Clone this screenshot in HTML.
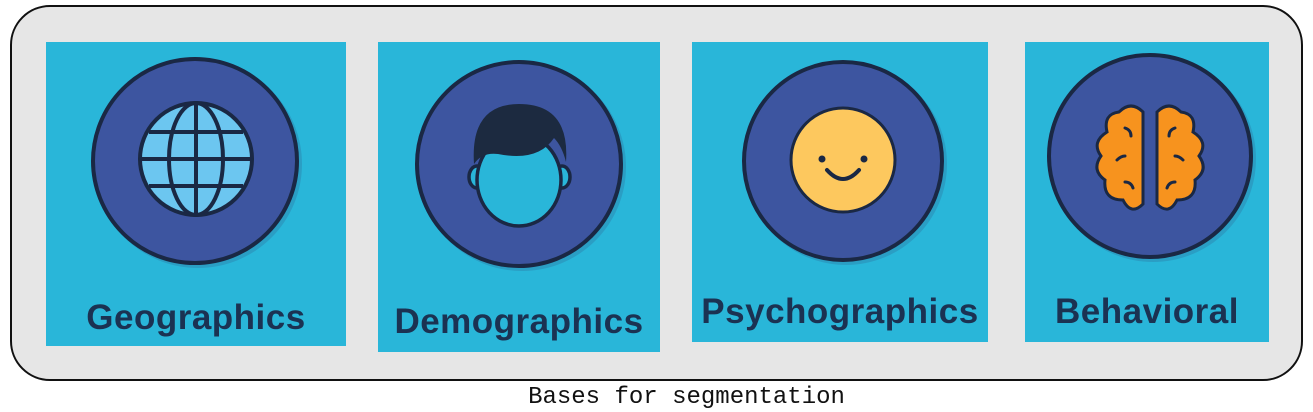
<!DOCTYPE html>
<html><head><style>
body{margin:0;width:1313px;height:412px;background:#fff;position:relative;overflow:hidden;font-family:"Liberation Sans",sans-serif}
.box{position:absolute;left:10px;top:5px;width:1289px;height:372px;border:2px solid #111;border-radius:40px;background:#e6e6e6}
.p{position:absolute;background:#29b6d9}
.t{position:absolute;left:-20px;right:-20px;text-align:center;font-weight:bold;color:#1b3252;font-size:35px;letter-spacing:0.5px}
svg{position:absolute;left:0;top:0}
.cap{position:absolute;left:0;width:1373px;top:384px;text-align:center;font-family:"Liberation Mono",monospace;font-size:24px;color:#111}
</style></head><body>
<div class="box"></div>
<div class="p" style="left:46px;top:42px;width:300px;height:304px">
<svg width="300" height="304"><circle cx="152" cy="122" r="104" fill="#2a9ec4"/><circle cx="149" cy="119" r="102" fill="#3d55a0" stroke="#1a2844" stroke-width="4"/>
<g stroke="#1a2844" stroke-width="4" fill="none"><circle cx="150" cy="117" r="56" fill="#6cc6f0"/><ellipse cx="150" cy="117" rx="27" ry="56"/><line x1="150" y1="61" x2="150" y2="173"/><line x1="94" y1="117" x2="206" y2="117"/><line x1="103" y1="90" x2="197" y2="90"/><line x1="103" y1="144" x2="197" y2="144"/></g></svg>
<div class="t" style="top:256px">Geographics</div></div>
<div class="p" style="left:378px;top:42px;width:282px;height:310px">
<svg width="282" height="310"><circle cx="144" cy="125" r="104" fill="#2a9ec4"/><circle cx="141" cy="122" r="102" fill="#3d55a0" stroke="#1a2844" stroke-width="4"/>
<g stroke="#1a2844" stroke-width="3.5"><ellipse cx="99" cy="135" rx="8" ry="11" fill="#29b6d9"/><ellipse cx="184" cy="135" rx="8" ry="11" fill="#29b6d9"/><ellipse cx="141" cy="138" rx="42" ry="46" fill="#29b6d9"/></g>
<path d="M96 122 Q92 62 141 62 Q192 62 188 120 Q184 104 176 96 Q160 120 120 112 Q104 110 96 122Z" fill="#1c2a40"/></svg>
<div class="t" style="top:260px">Demographics</div></div>
<div class="p" style="left:692px;top:42px;width:296px;height:300px">
<svg width="296" height="300"><circle cx="154" cy="122" r="101" fill="#2a9ec4"/><circle cx="151" cy="119" r="99" fill="#3d55a0" stroke="#1a2844" stroke-width="4"/>
<circle cx="151" cy="118" r="52" fill="#fdc85e" stroke="#1a2844" stroke-width="3"/><circle cx="130" cy="117" r="3.5" fill="#1a2844"/><circle cx="172" cy="117" r="3.5" fill="#1a2844"/><path d="M135 128 Q151 146 167 128" stroke="#1a2844" stroke-width="4" fill="none" stroke-linecap="round"/></svg>
<div class="t" style="top:250px">Psychographics</div></div>
<div class="p" style="left:1025px;top:42px;width:244px;height:300px">
<svg width="244" height="300"><circle cx="128" cy="117" r="103" fill="#2a9ec4"/><circle cx="125" cy="114" r="101" fill="#3d55a0" stroke="#1a2844" stroke-width="4"/>
<g fill="#f7931e" stroke="#1a2844" stroke-width="3"><path d="M118 70 Q106 58 94 70 Q78 72 82 90 Q66 100 76 114 Q66 128 80 138 Q78 158 98 158 Q106 174 118 162 Z"/><path d="M132 70 Q144 58 156 70 Q172 72 168 90 Q184 100 174 114 Q184 128 170 138 Q172 158 152 158 Q144 174 132 162 Z"/></g>
<g stroke="#1a2844" stroke-width="3" fill="none" stroke-linecap="round"><path d="M100 86 q6 2 6 8"/><path d="M92 118 q4 -4 8 -4"/><path d="M100 140 q6 0 8 6"/><path d="M150 86 q-6 2 -6 8"/><path d="M158 118 q-4 -4 -8 -4"/><path d="M150 140 q-6 0 -8 6"/></g></svg>
<div class="t" style="top:250px">Behavioral</div></div>
<div class="cap">Bases for segmentation</div>
</body></html>
